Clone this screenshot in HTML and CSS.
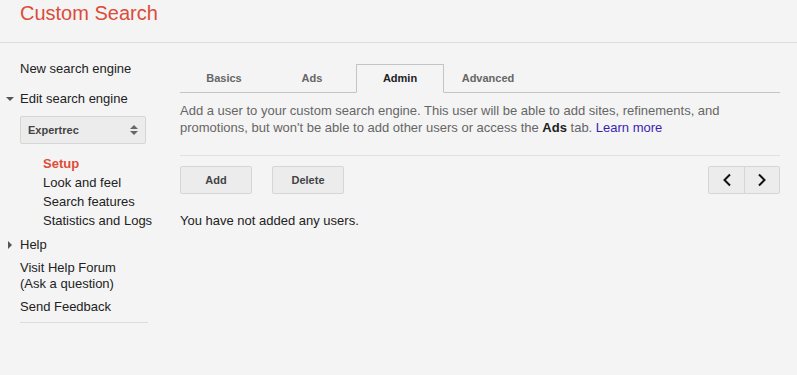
FILE: index.html
```html
<!DOCTYPE html>
<html>
<head>
<meta charset="utf-8">
<link rel="stylesheet" href="styles.css">
</head>
<body>
<header class="header"><span class="brand">Custom Search</span></header>
<div class="page">
  <nav class="sidebar">
    <a class="nav-item">New search engine</a>
    <a class="nav-item expandable open">Edit search engine</a>
    <div class="select"><span>Expertrec</span>
      <svg class="spinner" width="8" height="12" viewBox="0 0 8 12"><path d="M4 1 L8 5 H0 Z M0 7 H8 L4 11 Z" fill="#666"/></svg>
    </div>
    <ul class="subnav">
      <li class="active">Setup</li>
      <li>Look and feel</li>
      <li>Search features</li>
      <li>Statistics and Logs</li>
    </ul>
    <a class="nav-item expandable closed">Help</a>
    <a class="nav-item tight">Visit Help Forum<br>(Ask a question)</a>
    <a class="nav-item tight">Send Feedback</a>
    <div class="side-rule"></div>
  </nav>
  <main class="main">
    <div class="tabs">
      <div class="tab">Basics</div>
      <div class="tab">Ads</div>
      <div class="tab active">Admin</div>
      <div class="tab">Advanced</div>
    </div>
    <p class="desc">Add a user to your custom search engine. This user will be able to add sites, refinements, and promotions, but won't be able to add other users or access the <b>Ads</b> tab. <a class="link">Learn more</a></p>
    <div class="toolbar">
      <button class="btn">Add</button>
      <button class="btn">Delete</button>
      <div class="pager">
        <button class="pg"><svg width="10" height="14" viewBox="0 0 10 14"><path d="M8 1.5 L2.5 7 L8 12.5" fill="none" stroke="#111" stroke-width="2"/></svg></button>
        <button class="pg"><svg width="10" height="14" viewBox="0 0 10 14"><path d="M2 1.5 L7.5 7 L2 12.5" fill="none" stroke="#111" stroke-width="2"/></svg></button>
      </div>
    </div>
    <p class="empty">You have not added any users.</p>
  </main>
</div>
</body>
</html>
```
FILE: styles.css
```css
html, body { margin: 0; padding: 0; }
body {
  background: #f4f4f4;
  font-family: "Liberation Sans", Arial, sans-serif;
  font-size: 13px;
  color: #222;
  width: 797px;
  height: 375px;
  overflow: hidden;
}
.header {
  height: 43px;
  border-bottom: 1px solid #dcdcdc;
  box-sizing: border-box;
  padding-left: 20px;
}
.brand {
  display: block;
  color: #dd4b39;
  font-size: 20px;
  line-height: 26px;
  padding-top: 0px;
}
.page { display: flex; }
.sidebar {
  width: 128px;
  margin-left: 20px;
  padding-top: 18px;
  display: flex;
  flex-direction: column;
  white-space: nowrap;
}
.nav-item {
  display: block;
  line-height: 16px;
  color: #222;
  position: relative;
}
.nav-item + .nav-item { margin-top: 14px; }
.nav-item + .nav-item.tight { margin-top: 7px; }
.expandable::before {
  content: "";
  position: absolute;
  width: 0; height: 0;
}
.open::before {
  border-left: 4px solid transparent;
  border-right: 4px solid transparent;
  border-top: 4px solid #555;
  top: 6px;
  left: -14px;
}
.closed::before {
  border-top: 4px solid transparent;
  border-bottom: 4px solid transparent;
  border-left: 4px solid #555;
  top: 4px;
  left: -12px;
}
.select {
  margin-top: 9px;
  width: 126px;
  height: 28px;
  box-sizing: border-box;
  border: 1px solid #d6d6d6;
  border-radius: 2px;
  background: #ececec;
  display: flex;
  align-items: center;
  justify-content: space-between;
  padding: 0 7px 0 7px;
  font-size: 11px;
  font-weight: bold;
  color: #444;
}
.subnav {
  list-style: none;
  margin: 10px 0 0 0;
  padding: 0 0 0 23px;
}
.subnav li { line-height: 19px; }
.subnav li.active { color: #dd4b39; font-weight: bold; }
.subnav + .nav-item { margin-top: 7px; }
.side-rule {
  margin-top: 7px;
  height: 1px;
  background: #dcdcdc;
}
.main {
  margin-left: 32px;
  width: 600px;
  padding-top: 21px;
}
.tabs {
  display: flex;
  height: 29px;
  box-sizing: border-box;
  border-bottom: 1px solid #c4c4c4;
}
.tab {
  width: 88px;
  box-sizing: border-box;
  text-align: center;
  font-size: 11px;
  font-weight: bold;
  color: #666;
  line-height: 28px;
  height: 29px;
}
.tab.active {
  color: #222;
  border: 1px solid #c4c4c4;
  border-bottom-color: #f4f4f4;
  line-height: 26px;
}
.desc {
  margin: 0;
  padding: 9px 0 0 0;
  color: #666;
  line-height: 17px;
  height: 53px;
  border-bottom: 1px solid #e0e0e0;
}
.desc b { color: #222; }
.link { color: #3b1fb5; }
.toolbar {
  display: flex;
  margin-top: 10px;
  height: 28px;
}
.btn {
  width: 72px;
  height: 28px;
  margin-right: 20px;
  border: 1px solid #d6d6d6;
  border-radius: 2px;
  background: #ececec;
  font-family: inherit;
  font-size: 11px;
  font-weight: bold;
  color: #444;
  padding: 0;
}
.pager {
  margin-left: auto;
  display: flex;
  border: 1px solid #d6d6d6;
  border-radius: 2px;
  background: #ececec;
}
.pg {
  width: 35px;
  height: 26px;
  border: 0;
  background: transparent;
  padding: 0;
  display: flex;
  align-items: center;
  justify-content: center;
}
.pg + .pg { border-left: 1px solid #d6d6d6; }
.empty {
  margin: 19px 0 0 0;
  line-height: 16px;
}
```
